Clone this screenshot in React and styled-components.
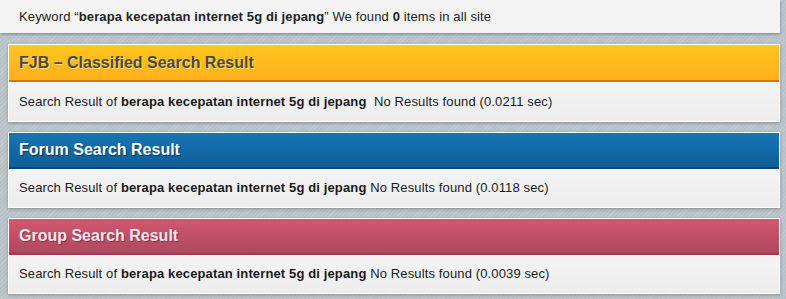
import React from 'react';
import styled, { createGlobalStyle, css } from 'styled-components';

const GlobalStyle = createGlobalStyle`
  html, body {
    margin: 0;
    padding: 0;
  }
  body {
    font-family: "Liberation Sans", Arial, sans-serif;
    background-color: #b7c2c8;
    background-image: repeating-linear-gradient(
      -45deg,
      rgba(255, 255, 255, 0.12) 0px,
      rgba(255, 255, 255, 0.12) 1px,
      transparent 1px,
      transparent 3px
    );
    min-height: 299px;
    overflow: hidden;
  }
`;

const Page = styled.div`
  display: flex;
  flex-direction: column;
  width: 786px;
`;

const KeywordBar = styled.div`
  width: 780px;
  height: 33px;
  line-height: 33px;
  box-sizing: border-box;
  padding: 0 19px;
  background: #f3f3f3;
  box-shadow: 0 1px 3px rgba(0, 0, 0, 0.35);
  font-size: 13px;
  letter-spacing: 0.13px;
  color: #222;
`;

const themes = {
  yellow: css`
    background: linear-gradient(to bottom, #ffc520 0%, #ffb019 100%);
    border-bottom-color: #d07812;
    color: #4b4838;
    text-shadow: 1px 1px 0 rgba(255, 230, 150, 0.9);
  `,
  blue: css`
    background: linear-gradient(to bottom, #1675b5 0%, #0f5d96 100%);
    border-bottom-color: #0b4470;
    color: #ffffff;
    text-shadow: 1px 1px 1px rgba(0, 0, 0, 0.45);
  `,
  pink: css`
    background: linear-gradient(to bottom, #d0596f 0%, #b0475e 100%);
    border-bottom-color: #9e3a50;
    color: #f6e6ee;
    text-shadow: 1px 1px 1px rgba(80, 20, 40, 0.5);
  `,
};

const Panel = styled.section`
  margin: ${(p) => (p.$first ? '11px' : '10px')} 0 0 8px;
  width: 772px;
  box-sizing: border-box;
  border: 1px solid #ffffff;
  background: #f0f0f0;
  box-shadow: 0 1px 3px rgba(0, 0, 0, 0.3);
`;

const PanelHeader = styled.h2`
  margin: 0;
  height: ${(p) => (p.$first ? '35px' : '34px')};
  line-height: ${(p) => (p.$first ? '35px' : '34px')};
  padding: 0 10px;
  font-size: 16px;
  font-weight: bold;
  border-bottom: 2px solid;
  ${(p) => themes[p.$tone]}
`;

const PanelBody = styled.div`
  height: ${(p) => (p.$first ? '39px' : '38px')};
  line-height: ${(p) => (p.$first ? '39px' : '38px')};
  padding: 0 10px;
  font-size: 13px;
  letter-spacing: 0.13px;
  color: #1a1a1a;
  background: linear-gradient(to bottom, #f3f3f3, #ededed);
  white-space: pre;
`;

const results = [
  { title: 'FJB \u2013 Classified Search Result', tone: 'yellow', time: '0.0211', gap: '  ' },
  { title: 'Forum Search Result', tone: 'blue', time: '0.0118', gap: ' ' },
  { title: 'Group Search Result', tone: 'pink', time: '0.0039', gap: ' ' },
];

const keyword = 'berapa kecepatan internet 5g di jepang';

export default function App() {
  return (
    <>
      <GlobalStyle />
      <Page>
        <KeywordBar>
          Keyword &ldquo;<b>{keyword}</b>&rdquo; We found <b>0</b> items in all site
        </KeywordBar>
        {results.map((r, i) => (
          <Panel key={r.tone} $first={i === 0}>
            <PanelHeader $tone={r.tone} $first={i === 0}>
              {r.title}
            </PanelHeader>
            <PanelBody $first={i === 0}>
              {'Search Result of '}
              <b>{keyword}</b>
              {`${r.gap}No Results found (${r.time} sec)`}
            </PanelBody>
          </Panel>
        ))}
      </Page>
    </>
  );
}
